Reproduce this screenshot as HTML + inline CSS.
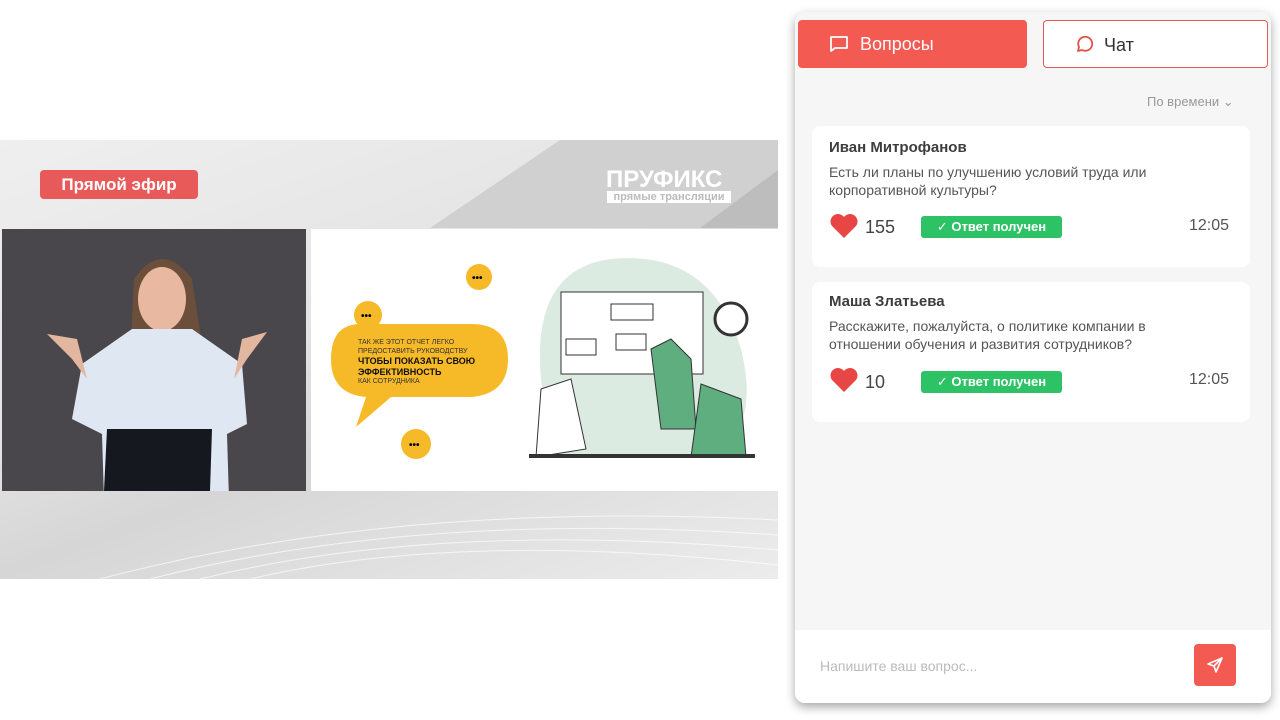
<!DOCTYPE html>
<html><head><meta charset="utf-8"><style>
*{margin:0;padding:0;box-sizing:border-box}
body{width:1280px;height:720px;background:#fff;position:relative;overflow:hidden;font-family:"Liberation Sans","DejaVu Sans",sans-serif}
.abs{position:absolute}
.stage{left:0;top:140px;width:778px;height:439px;background:linear-gradient(160deg,#efefef 0%,#e4e4e4 40%,#d6d6d6 60%,#ececec 100%)}
.live{left:40px;top:170px;width:158px;height:29px;background:#e85a5a;border-radius:4px;color:#fff;font-weight:bold;font-size:17px;line-height:29px;text-align:center}
.panel{left:795px;top:12px;width:476px;height:691px;background:#f6f6f6;border-radius:10px;box-shadow:0 4px 10px rgba(0,0,0,.35);overflow:hidden}
.btn{position:absolute;top:8px;height:48px;border-radius:4px;font-size:18px;line-height:48px}
.card{position:absolute;left:17px;width:438px;background:#fff;border-radius:8px}
.name{position:absolute;left:17px;font-weight:bold;font-size:15px;color:#3d3d3d}
.txt{position:absolute;left:17px;font-size:14px;color:#555;line-height:18px;width:360px}
.badge{position:absolute;left:109px;width:141px;height:22px;background:#2ec266;border-radius:3px;color:#fff;font-size:13px;font-weight:bold;line-height:22px;text-align:center}
.cnt{position:absolute;left:53px;font-size:18px;color:#444}
.time{position:absolute;right:21px;font-size:16px;color:#555}
</style></head><body>
<div class="abs stage">
<svg width="778" height="439" style="position:absolute;left:0;top:0">
<polygon points="430,88 560,0 778,0 778,88" fill="#d0d0d0"/>
<polygon points="700,88 778,30 778,88" fill="#bdbdbd"/>
<g stroke="#fff" stroke-width="1" fill="none" opacity=".7">
<path d="M100,439 Q400,360 778,380"/><path d="M150,439 Q420,370 778,395"/><path d="M200,439 Q440,380 778,410"/><path d="M250,439 Q460,390 778,425"/>
</g></svg>
<div class="abs" style="left:606px;top:26px;color:#fff;font-weight:bold;font-size:24px;letter-spacing:0">ПРУФИКС</div>
<div class="abs" style="left:607px;top:51px;width:124px;height:12px;background:#fff;color:#bbb;font-size:11px;line-height:12px;text-align:center;font-weight:bold">прямые трансляции</div>
</div>
<div class="abs live">Прямой эфир</div>
<div class="abs" style="left:2px;top:229px;width:304px;height:262px;background:#4a474c;overflow:hidden">
<svg width="304" height="262">
<path d="M132,50 Q160,10 190,50 L205,150 L195,160 L185,100 L140,100 L128,130Z" fill="#6b4f3a"/>
<ellipse cx="160" cy="70" rx="24" ry="32" fill="#e8b9a0"/>
<path d="M130,100 L80,135 L70,190 L100,205 L105,370 L230,370 L225,205 L245,195 L240,135 L190,100Z" fill="#dfe7f2"/>
<path d="M75,110 L45,105 L70,130 L85,150Z" fill="#e3b6a0"/>
<path d="M240,110 L265,103 L245,130 L232,150Z" fill="#e3b6a0"/>
<path d="M105,200 L210,200 L208,262 L102,262Z" fill="#15181f"/>
</svg></div>
<div class="abs" style="left:311px;top:229px;width:467px;height:262px;background:#fff">
<svg width="467" height="262">
<path d="M50,95 Q20,95 20,130 Q20,165 55,168 L45,198 L80,168 L160,168 Q197,165 197,130 Q197,95 160,95Z" fill="#f6b928"/>
<circle cx="57" cy="86" r="14" fill="#f6b928"/><circle cx="168" cy="48" r="13" fill="#f6b928"/><circle cx="105" cy="215" r="15" fill="#f6b928"/>
<text x="50" y="90" font-size="10" font-weight="bold">•••</text><text x="161" y="52" font-size="10" font-weight="bold">•••</text><text x="98" y="219" font-size="10" font-weight="bold">•••</text>
<text x="47" y="115" font-size="7" fill="#333">ТАК ЖЕ ЭТОТ ОТЧЕТ ЛЕГКО</text>
<text x="47" y="124" font-size="7" fill="#333">ПРЕДОСТАВИТЬ РУКОВОДСТВУ</text>
<text x="47" y="135" font-size="9" font-weight="bold" fill="#111">ЧТОБЫ ПОКАЗАТЬ СВОЮ</text>
<text x="47" y="146" font-size="9" font-weight="bold" fill="#111">ЭФФЕКТИВНОСТЬ</text>
<text x="47" y="154" font-size="7" fill="#333">КАК СОТРУДНИКА</text>
<path d="M230,150 Q220,40 300,30 Q400,20 430,120 Q450,200 400,228 L240,228Z" fill="#dcebe1"/>
<rect x="250" y="63" width="142" height="82" fill="#fff" stroke="#333"/>
<rect x="300" y="75" width="42" height="16" fill="#fff" stroke="#333"/><rect x="255" y="110" width="30" height="16" fill="#fff" stroke="#333"/><rect x="305" y="105" width="30" height="16" fill="#fff" stroke="#333"/>
<circle cx="420" cy="90" r="16" fill="#fff" stroke="#333" stroke-width="3"/>
<path d="M340,120 L360,110 L380,130 L385,200 L350,200Z" fill="#5fae7f" stroke="#333"/>
<path d="M390,155 L430,170 L435,228 L380,228Z" fill="#5fae7f" stroke="#333"/>
<path d="M230,160 L260,150 L275,220 L225,228Z" fill="#fff" stroke="#333"/>
<rect x="218" y="225" width="226" height="4" fill="#333"/>
</svg></div>

<div class="abs panel">
<div class="btn" style="left:3px;width:229px;background:#f25a52;color:#fff">
<svg class="abs" style="left:31px;top:15px" width="20" height="18" viewBox="0 0 20 18"><path d="M2,2 H18 V13 H6 L2,16Z" fill="none" stroke="#fff" stroke-width="1.8" stroke-linejoin="round"/></svg>
<span class="abs" style="left:62px">Вопросы</span></div>
<div class="btn" style="left:248px;width:225px;border:1.5px solid #e25a55;background:#fff;color:#333">
<svg class="abs" style="left:30px;top:14px" width="20" height="20" viewBox="0 0 20 20"><path d="M4,16 L5,12 A7,7 0 1 1 8,15 Z" fill="none" stroke="#e2504a" stroke-width="1.8" stroke-linejoin="round"/></svg>
<span class="abs" style="left:60px">Чат</span></div>
<div class="abs" style="left:352px;top:82px;font-size:13px;color:#999">По времени ⌄</div>
<div class="card" style="top:114px;height:141px">
<div class="name" style="top:13px">Иван Митрофанов</div>
<div class="txt" style="top:37px">Есть ли планы по улучшению условий труда или корпоративной культуры?</div>
<svg class="abs" style="left:17px;top:88px" width="30" height="25" viewBox="0 0 30 25"><path d="M15,24 L3,12 A7,7 0 0 1 15,3 A7,7 0 0 1 27,12Z" fill="#e84545"/></svg>
<div class="cnt" style="top:91px">155</div>
<div class="badge" style="top:90px">✓ Ответ получен</div>
<div class="time" style="top:91px">12:05</div>
</div>
<div class="card" style="top:270px;height:140px">
<div class="name" style="top:11px">Маша Златьева</div>
<div class="txt" style="top:35px">Расскажите, пожалуйста, о политике компании в отношении обучения и развития сотрудников?</div>
<svg class="abs" style="left:17px;top:86px" width="30" height="25" viewBox="0 0 30 25"><path d="M15,24 L3,12 A7,7 0 0 1 15,3 A7,7 0 0 1 27,12Z" fill="#e84545"/></svg>
<div class="cnt" style="top:90px">10</div>
<div class="badge" style="top:89px">✓ Ответ получен</div>
<div class="time" style="top:89px">12:05</div>
</div>
<div class="abs" style="left:0;top:618px;width:476px;height:73px;background:#fff">
<div class="abs" style="left:25px;top:28px;font-size:14px;color:#bbb">Напишите ваш вопрос...</div>
<div class="abs" style="left:399px;top:14px;width:42px;height:42px;background:#f25a52;border-radius:4px">
<svg class="abs" style="left:12px;top:12px" width="18" height="18" viewBox="0 0 18 18"><path d="M16,2 L2,8 L8,10 L10,16Z M16,2 L8,10" fill="none" stroke="#fff" stroke-width="1.6" stroke-linejoin="round"/></svg>
</div></div>
</div>
</body></html>
